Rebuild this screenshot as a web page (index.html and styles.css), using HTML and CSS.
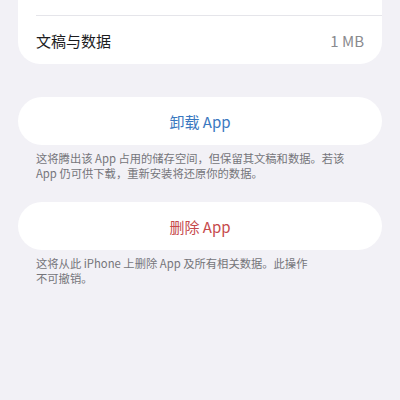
FILE: index.html
```html
<!DOCTYPE html>
<html lang="zh-CN">
  <head>
    <meta charset="UTF-8" />
    <meta name="viewport" content="width=device-width, initial-scale=1.0" />
    <title>App 储存空间</title>
    <link rel="stylesheet" href="styles.css">
  </head>

  <body>
    <div class="group">
      <div class="row row-top"></div>
      <div class="row">
        <p>文稿与数据</p>
        <p class="value">1 MB</p>
      </div>
    </div>

    <div class="section">
      <div class="button blue">卸载 App</div>
      <p class="footer">这将腾出该 App 占用的储存空间，但保留其文稿和数据。若该<br />App 仍可供下载，重新安装将还原你的数据。</p>
    </div>

    <div class="section second">
      <div class="button red">删除 App</div>
      <p class="footer">这将从此 iPhone 上删除 App 及所有相关数据。此操作<br />不可撤销。</p>
    </div>
  </body>
</html>
```

FILE: styles.css
```css
body {
  margin: 0;
  background-color: #f2f1f6;
  font-family: "Noto Sans CJK SC", "Inter", sans-serif;
  color: #1c1c1e;
}

.group {
  background-color: white;
  margin: -33px 18px 0;
  padding-left: 18px;
  border-radius: 22px;
}

.row {
  display: flex;
  justify-content: space-between;
  align-items: center;
  height: 48px;
  padding-right: 18px;
  font-size: 15px;
}

.row p {
  margin: 0;
}

.row-top {
  border-bottom: 1px solid #e5e5ea;
}

.value {
  color: #8a8a8e;
}

.section {
  margin-top: 33px;
}

.second {
  margin-top: 22px;
}

.button {
  background-color: white;
  margin: 0 18px;
  height: 48px;
  border-radius: 24px;
  display: flex;
  justify-content: center;
  align-items: center;
  font-size: 15px;
}

.blue {
  color: #3a78c0;
}

.red {
  color: #c64a4b;
}

.footer {
  margin: 6px 36px 0;
  font-size: 11.3px;
  line-height: 14.5px;
  color: #75757a;
  white-space: nowrap;
}
```
